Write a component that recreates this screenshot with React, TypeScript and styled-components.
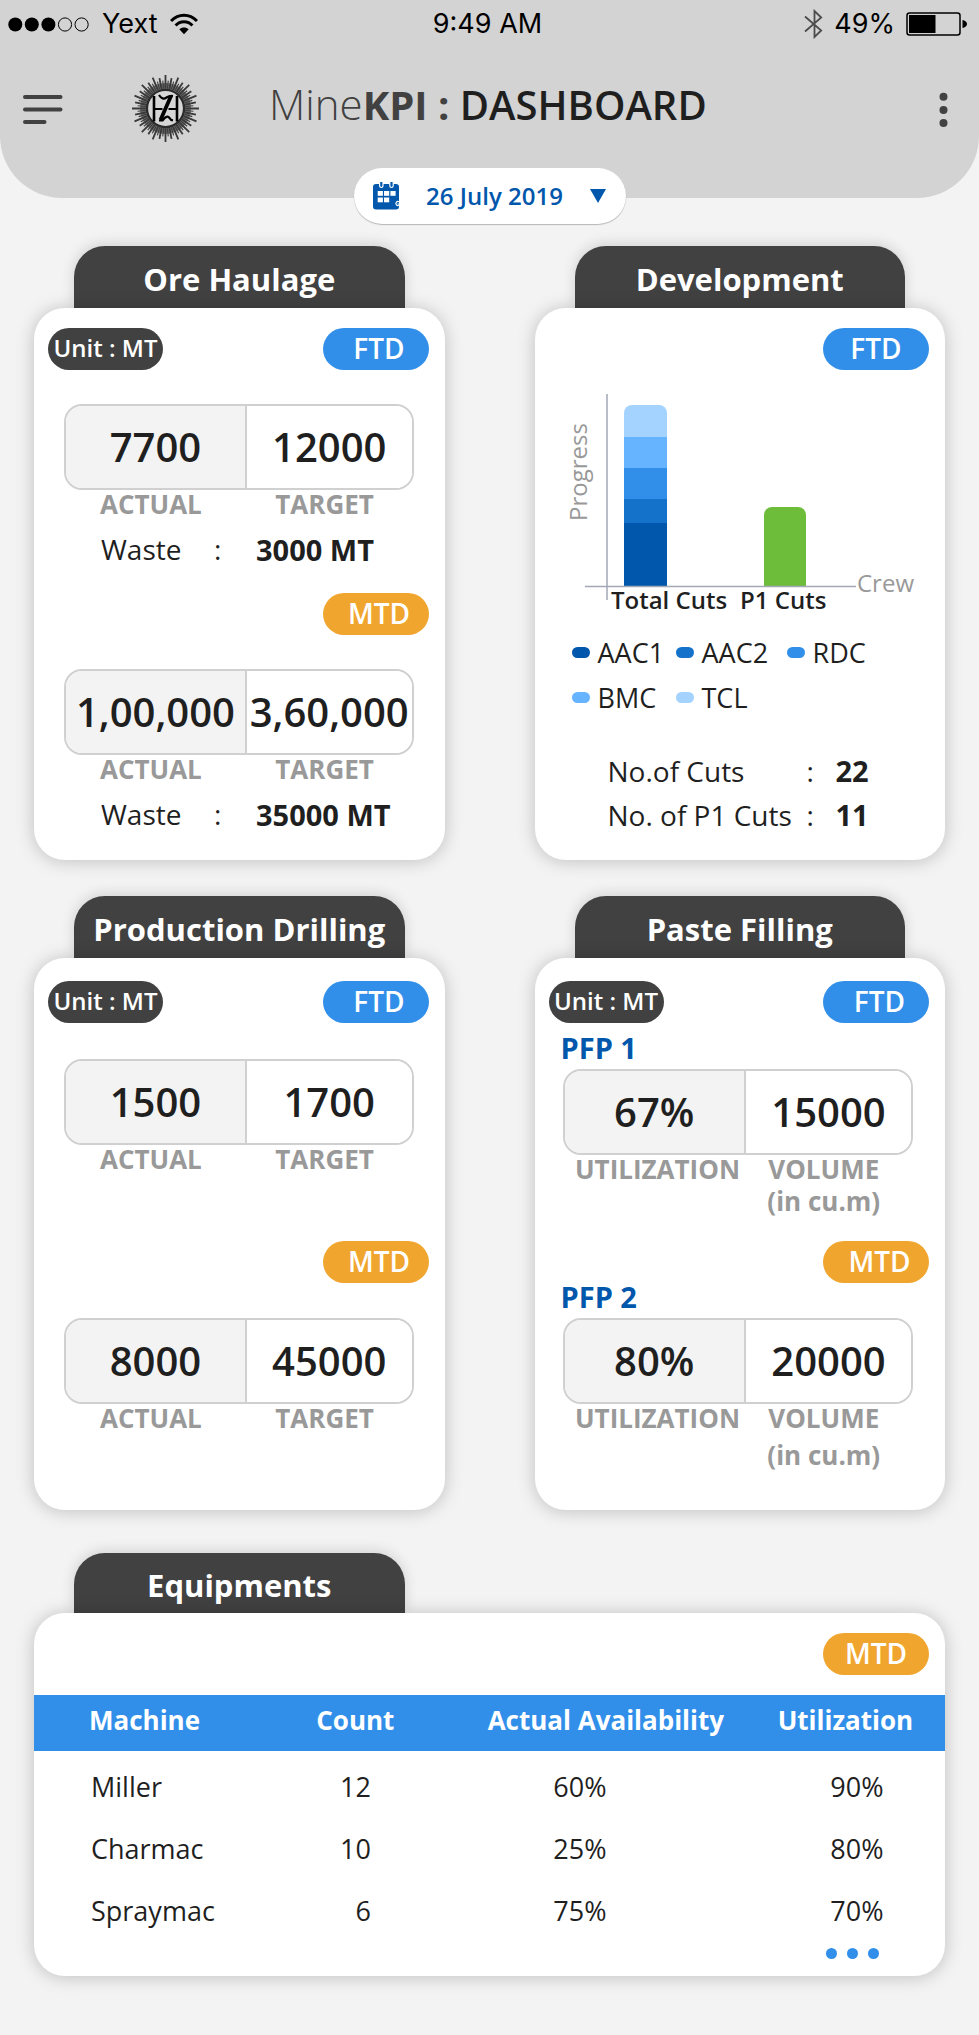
import React from "react";
import styled, { createGlobalStyle, ThemeProvider } from "styled-components";

const theme = {
  page: "#f3f3f3",
  header: "#d3d3d3",
  dark: "#414141",
  ink: "#1f1f1f",
  muted: "#999999",
  line: "#d0d0d0",
  blue: "#318fea",
  navy: "#0057ab",
  amber: "#f0a52e",
  green: "#6dbd3b",
};
type Theme = typeof theme;
const c = (key: keyof Theme) => (p: { theme: any }) => p.theme[key] as string;

const GlobalStyle = createGlobalStyle`
  *, *::before, *::after { box-sizing: border-box; }
  body {
    margin: 0;
    background: ${theme.page};
    color: ${theme.ink};
    font-family: "Open Sans", "Noto Sans", sans-serif;
  }
  h1, h2, h3, p { margin: 0; }
  svg { display: block; flex: none; }
`;

/* ---------- Header ---------- */

const Header = styled.header`
  height: 198px;
  background: ${c("header")};
  border-radius: 0 0 62px 62px;
`;

const StatusBar = styled.div`
  display: grid;
  grid-template-columns: 1fr auto 1fr;
  align-items: center;
  height: 48px;
  padding: 0 12px 0 8px;
  color: #000;
  font: 400 27px/48px Inter, Roboto, sans-serif;
`;

const StatusGroup = styled.div<{ $gap: number; $end?: boolean }>`
  display: flex;
  align-items: center;
  gap: ${(p) => p.$gap}px;
  justify-content: ${(p) => (p.$end ? "flex-end" : "flex-start")};
`;

const Toolbar = styled.div`
  display: flex;
  align-items: center;
  height: 116px;
  padding: 5px 27px 0 22px;
`;

const IconButton = styled.button`
  display: flex;
  padding: 0;
  border: 0;
  background: none;
  color: ${c("dark")};
  cursor: pointer;
`;

const LogoSlot = styled.div`
  margin: 0 69px 0 68px;
`;

const Title = styled.h1`
  flex: 1;
  padding-bottom: 8px;
  color: ${c("ink")};
  font-size: 40px;
  font-weight: 600;
  line-height: 56px;
  white-space: nowrap;
`;

const Brand = styled.span`
  color: ${c("dark")};
  font-weight: 700;
`;

const BrandLight = styled.span`
  font-size: 42px;
  font-weight: 300;
`;

const DateButton = styled.button`
  position: relative;
  display: flex;
  align-items: center;
  justify-content: space-between;
  width: 272px;
  height: 56px;
  margin: -30px auto 0;
  padding: 0 20px 0 19px;
  border: 0;
  border-radius: 28px;
  background: #fff;
  box-shadow: 0 1px 1px rgba(0, 0, 0, 0.25);
  color: ${c("navy")};
  font: 600 24px/56px "Open Sans", sans-serif;
  cursor: pointer;
`;

/* ---------- Panels ---------- */

const Main = styled.main`
  padding: 22px 34px 59px;
`;

const PanelGrid = styled.div`
  display: grid;
  grid-template-columns: 1fr 1fr;
  gap: 36px 90px;
`;

const Panel = styled.section`
  display: flex;
  flex-direction: column;
`;

const WidePanel = styled(Panel)`
  margin-top: 43px;
`;

const Tab = styled.h2`
  height: 62px;
  margin: 0 40px;
  padding-top: 4px;
  border-radius: 31px 31px 0 0;
  background: ${c("dark")};
  box-shadow: 0 -2px 14px rgba(0, 0, 0, 0.14);
  color: #fff;
  font-size: 31px;
  font-weight: 700;
  line-height: 58px;
  text-align: center;
  white-space: nowrap;
`;

const WideTab = styled(Tab)`
  width: calc((100% - 90px) / 2 - 80px);
  height: 60px;
  line-height: 56px;
`;

const Card = styled.div<{ $top?: number }>`
  flex: 1;
  min-height: 552px;
  padding: ${(p) => p.$top ?? 20}px 0 23px;
  border-radius: 31px;
  background: #fff;
  box-shadow: 0 1px 18px rgba(0, 0, 0, 0.22);
`;

const WideCard = styled(Card)`
  min-height: 0;
  padding-bottom: 12px;
`;

const BadgeRow = styled.div<{ $gap?: number }>`
  display: flex;
  justify-content: space-between;
  margin-top: ${(p) => p.$gap ?? 0}px;
  padding: 0 16px 0 14px;
`;

const UnitBadge = styled.span`
  width: 115px;
  height: 42px;
  border-radius: 21px;
  background: ${c("dark")};
  color: #fff;
  font-size: 24px;
  font-weight: 600;
  line-height: 40px;
  text-align: center;
  white-space: nowrap;
`;

const PeriodBadge = styled.span<{ $kind: "FTD" | "MTD"; $centered?: boolean }>`
  width: 106px;
  height: 42px;
  margin-left: auto;
  padding-left: ${(p) => (p.$centered ? 0 : 7)}px;
  border-radius: 21px;
  background: ${(p) => (p.$kind === "FTD" ? p.theme.blue : p.theme.amber)};
  color: #fff;
  font-size: 28px;
  font-weight: 600;
  line-height: 40px;
  text-align: center;
`;

const Meter = styled.div<{ $left: number; $right: number; $gap?: number }>`
  margin: ${(p) => p.$gap ?? 0}px ${(p) => p.$right}px 0 ${(p) => p.$left}px;
`;

const MeterBox = styled.div`
  display: grid;
  grid-template-columns: 11fr 10fr;
  height: 86px;
  overflow: hidden;
  border: 2px solid ${c("line")};
  border-radius: 18px;
`;

const MeterValue = styled.span<{ $shaded?: boolean }>`
  min-width: 0;
  border-right: ${(p) => (p.$shaded ? `2px solid ${p.theme.line}` : "0")};
  background: ${(p) => (p.$shaded ? p.theme.page : "#fff")};
  font-size: 40px;
  font-weight: 600;
  line-height: 82px;
  text-align: center;
  white-space: nowrap;
`;

const MeterLabels = styled.div<{ $wide?: boolean; $line?: number }>`
  display: grid;
  grid-template-columns: ${(p) => (p.$wide ? "4fr 3fr" : "1fr 1fr")};
  padding-right: ${(p) => (p.$wide ? 18 : 2)}px;
  color: ${c("muted")};
  font-size: 26px;
  font-weight: 700;
  line-height: ${(p) => p.$line ?? 28}px;
  text-align: center;
  white-space: nowrap;
`;

const MeterNote = styled.span`
  grid-column: 2;
`;

const PlantName = styled.h3<{ $gap?: number }>`
  margin: ${(p) => p.$gap ?? 0}px 28px 7px 26px;
  color: ${c("navy")};
  font-size: 29px;
  font-weight: 700;
  line-height: 28px;
`;

const FactRow = styled.p<{ $columns: string; $left: number; $line: number; $gap?: number }>`
  display: grid;
  grid-template-columns: ${(p) => p.$columns};
  margin-top: ${(p) => p.$gap ?? 0}px;
  padding-left: ${(p) => p.$left}px;
  font-size: 28px;
  line-height: ${(p) => p.$line}px;
  white-space: nowrap;
`;

const FactValue = styled.strong`
  font-size: 29px;
  font-weight: 700;
`;

/* ---------- Chart ---------- */

const ChartSvg = styled.svg`
  margin: 16px 0 0 26px;
  font-size: 24px;
`;

const Legend = styled.ul`
  display: grid;
  grid-template-columns: 104px 111px auto;
  margin: 14px 0 29px;
  padding: 0 0 0 37px;
  list-style: none;
`;

const LegendItem = styled.li<{ $color: string }>`
  display: flex;
  align-items: center;
  gap: 8px;
  font-size: 27px;
  line-height: 45px;
  white-space: nowrap;

  &::before {
    content: "";
    width: 18px;
    height: 11px;
    border-radius: 6px;
    background: ${(p) => p.$color};
  }
`;

/* ---------- Table ---------- */

const EquipmentTable = styled.table`
  width: 100%;
  margin-top: 20px;
  border-collapse: collapse;
  table-layout: fixed;
`;

const Col = styled.col<{ $width: number }>`
  width: ${(p) => p.$width}%;
`;

const Th = styled.th<{ $pad: string; $left?: boolean }>`
  height: 56px;
  padding: ${(p) => p.$pad};
  background: ${c("blue")};
  color: #fff;
  font-size: 26px;
  font-weight: 700;
  line-height: 50px;
  text-align: ${(p) => (p.$left ? "left" : "center")};
  white-space: nowrap;
`;

const Td = styled.td<{ $align: "left" | "center" | "right"; $pad: string }>`
  height: 62px;
  padding: ${(p) => p.$pad};
  font-size: 27px;
  line-height: 62px;
  text-align: ${(p) => p.$align};

  tr:first-child > & {
    height: 67px;
    padding-top: 5px;
  }
`;

const MoreButton = styled.button`
  display: flex;
  align-items: center;
  gap: 10px;
  height: 22px;
  margin: 0 66px 0 auto;
  padding: 0;
  border: 0;
  background: none;
  cursor: pointer;
`;

const MoreDot = styled.span`
  width: 11px;
  height: 11px;
  border-radius: 50%;
  background: ${c("blue")};
`;

/* ---------- Icons ---------- */

const SignalIcon = () => (
  <svg width="82" height="16" viewBox="0 0 82 16" aria-hidden="true">
    {[7.3, 23.8, 40.4].map((x) => <circle key={x} cx={x} cy="8.5" r="7" />)}
    {[57, 73.6].map((x) => (
      <circle key={x} cx={x} cy="8.5" r="6.6" fill="none" stroke="#000" strokeWidth="1" />
    ))}
  </svg>
);

const WifiIcon = () => (
  <svg width="28" height="22" viewBox="0 0 28 22" aria-hidden="true">
    <g fill="none" stroke="#000" strokeWidth="3">
      <path d="M1 8 C8.5 0.2 19.5 0.2 27 8" />
      <path d="M5.6 12.4 C10.2 7.4 17.8 7.4 22.4 12.4" />
    </g>
    <path d="M9.3 16.3 C12 13.8 16 13.8 18.7 16.3 L14 21.3 Z" />
  </svg>
);

const BluetoothIcon = () => (
  <svg width="19" height="30" viewBox="0 0 19 30" aria-hidden="true">
    <path d="M1 7.5 L17.2 21.5 L10.5 28 V2 L17.2 8.5 L1 22.5" fill="none" stroke="#4c4c4c" strokeWidth="1.8" />
  </svg>
);

const BatteryIcon = () => (
  <svg width="61" height="24" viewBox="0 0 61 24" aria-hidden="true">
    <rect x="1" y="1" width="53" height="22" rx="2.5" fill="none" stroke="#000" strokeWidth="1.5" />
    <rect x="3" y="3" width="26.5" height="18" />
    <path d="M56.5 8 C59 8.5 61 10 61 12 C61 14 59 15.5 56.5 16 Z" />
  </svg>
);

const MenuIcon = () => (
  <svg width="41" height="31" viewBox="0 0 41 31" aria-hidden="true">
    <path d="M3 4 H38.5 M3 16.5 H38.5 M3 29 H22.5" stroke="currentColor" strokeWidth="4" strokeLinecap="round" />
  </svg>
);

const KebabIcon = () => (
  <svg width="17" height="36" viewBox="0 0 17 36" aria-hidden="true" fill="currentColor">
    {[5.7, 19, 32].map((y) => <circle key={y} cx="8.5" cy={y} r="4" />)}
  </svg>
);

const ray = (i: number, n: number, r1: number, r2: number) => {
  const a = (i / n) * Math.PI * 2;
  return `M${Math.sin(a) * r1} ${-Math.cos(a) * r1}L${Math.sin(a) * r2} ${-Math.cos(a) * r2}`;
};

const Logo = () => (
  <svg width="69" height="69" viewBox="-34.5 -34.5 69 69" role="img" aria-label="Company logo">
    <circle r="22.5" fill="none" stroke="#6f6f6f" strokeWidth="6" />
    <g stroke="#3a3a3a" fill="none">
      <path d={Array.from({ length: 64 }, (_, i) => ray(i, 64, 20, 28)).join("")} strokeWidth="1.1" />
      <path d={Array.from({ length: 32 }, (_, i) => ray(i, 32, 20, i % 2 ? 31 : 33.5)).join("")} strokeWidth="1.8" />
    </g>
    <circle r="18.6" fill="#d6d6d6" stroke="#2b2b2b" strokeWidth="2.4" />
    <g fill="none" stroke="#000">
      <path d="M-11.5 -12.5 V13 M11.5 -12.5 V13" strokeWidth="2.6" />
      <path d="M-11.5 0.5 H-3 M3 0.5 H11.5" strokeWidth="2.2" />
      <path d="M5.5 -12.5 L-5 11.5" strokeWidth="3.8" />
      <path d="M-6.5 -13.5 Q-3 -8 1 -11 Q4 -13 7.5 -12.5" strokeWidth="2.2" />
      <path d="M-6.5 12 H-3 Q1.5 6 4 9.500 Q5 11.5 7.5 12" strokeWidth="2.2" />
    </g>
  </svg>
);

const CalendarIcon = () => (
  <svg width="27" height="28" viewBox="0 0 27 28" aria-hidden="true">
    <rect y="2" width="26" height="25.5" rx="3" fill={theme.navy} />
    <g fill={theme.navy} stroke="#fff" strokeWidth="1.2">
      <rect x="6.6" y="-1" width="3.4" height="6.5" rx="1.7" />
      <rect x="16.8" y="-1" width="3.4" height="6.5" rx="1.7" />
    </g>
    <g fill="#fff">
      {[4.7, 11, 17.4].map((x) => <rect key={x} x={x} y="9" width="5.2" height="4.8" />)}
      {[4.7, 11].map((x) => <rect key={x} x={x} y="15.5" width="5.2" height="4.8" />)}
    </g>
    <path d="M26 19.8 A2 2 0 1 0 26 23.2 M24.5 22 H26.5" fill="none" stroke="#fff" strokeWidth="1.2" />
  </svg>
);

const CaretIcon = () => (
  <svg width="16" height="14" viewBox="0 0 16 14" aria-hidden="true">
    <path d="M0 0 H16 L8 14 Z" fill={theme.navy} />
  </svg>
);

/* ---------- Data ---------- */

const crews = [
  { name: "AAC1", color: "#0057ab", height: 63 },
  { name: "AAC2", color: "#1572cb", height: 24 },
  { name: "RDC", color: "#318fea", height: 31 },
  { name: "BMC", color: "#66b3ff", height: 31 },
  { name: "TCL", color: "#a4d3ff", height: 32 },
];

const equipment = [
  ["Miller", "12", "60%", "90%"],
  ["Charmac", "10", "25%", "80%"],
  ["Spraymac", "6", "75%", "70%"],
];

/* ---------- Parts ---------- */

const ActualTarget = ({ actual, target, gap }: { actual: string; target: string; gap: number }) => (
  <Meter $left={30} $right={31} $gap={gap}>
    <MeterBox>
      <MeterValue $shaded>{actual}</MeterValue>
      <MeterValue>{target}</MeterValue>
    </MeterBox>
    <MeterLabels>
      <span>ACTUAL</span>
      <span>TARGET</span>
    </MeterLabels>
  </Meter>
);

const Plant = ({ utilization, volume, noteLine }: { utilization: string; volume: string; noteLine: number }) => (
  <Meter $left={28} $right={32}>
    <MeterBox>
      <MeterValue $shaded>{utilization}</MeterValue>
      <MeterValue>{volume}</MeterValue>
    </MeterBox>
    <MeterLabels $wide>
      <span>UTILIZATION</span>
      <span>VOLUME</span>
    </MeterLabels>
    <MeterLabels $wide $line={noteLine}>
      <MeterNote>(in cu.m)</MeterNote>
    </MeterLabels>
  </Meter>
);

const Waste = ({ value }: { value: string }) => (
  <FactRow $columns="113px 42px auto" $left={67} $line={39} $gap={12}>
    <span>Waste</span>
    <span>:</span>
    <FactValue>{value}</FactValue>
  </FactRow>
);

const CutsFact = ({ label, value }: { label: string; value: string }) => (
  <FactRow $columns="199px 29px auto" $left={73} $line={44}>
    <span>{label}</span>
    <span>:</span>
    <FactValue>{value}</FactValue>
  </FactRow>
);

const CrewChart = () => {
  const base = 200;
  let top = base;
  return (
    <ChartSvg width="370" height="230" viewBox="0 0 370 230" role="img" aria-label="Cuts by crew">
      <defs>
        <clipPath id="stack">
          <rect x="63" y="19" width="43" height="200" rx="8" />
        </clipPath>
        <clipPath id="plot">
          <rect width="370" height={base} />
        </clipPath>
      </defs>
      <g clipPath="url(#plot)">
        <g clipPath="url(#stack)">
          {crews.map((crew) => {
            top -= crew.height;
            return <rect key={crew.name} x="63" y={top} width="43" height={crew.height} fill={crew.color} />;
          })}
        </g>
        <rect x="203" y="121" width="42" height="100" rx="8" fill={theme.green} />
      </g>
      <path d="M46 8 V214 M24 200.5 H295" stroke="#a3a8b5" strokeWidth="1.5" />
      <g fill={theme.muted}>
        <text transform="translate(26 135) rotate(-90)">Progress</text>
        <text x="296" y="206">Crew</text>
      </g>
      <g fill={theme.ink} fontWeight="600">
        <text x="50" y="223">Total Cuts</text>
        <text x="179" y="223">P1 Cuts</text>
      </g>
    </ChartSvg>
  );
};

export default function App() {
  return (
    <ThemeProvider theme={theme}>
      <GlobalStyle />
      <Header>
        <StatusBar>
          <StatusGroup $gap={12}>
            <SignalIcon />
            <span>Yext</span>
            <WifiIcon />
          </StatusGroup>
          <span>9:49 AM</span>
          <StatusGroup $gap={11} $end>
            <BluetoothIcon />
            <span>49%</span>
            <BatteryIcon />
          </StatusGroup>
        </StatusBar>
        <Toolbar>
          <IconButton type="button" aria-label="Menu"><MenuIcon /></IconButton>
          <LogoSlot><Logo /></LogoSlot>
          <Title>
            <Brand><BrandLight>Mine</BrandLight>KPI :</Brand> DASHBOARD
          </Title>
          <IconButton type="button" aria-label="More options"><KebabIcon /></IconButton>
        </Toolbar>
      </Header>
      <DateButton type="button" aria-haspopup="dialog">
        <CalendarIcon />
        26 July 2019
        <CaretIcon />
      </DateButton>

      <Main>
        <PanelGrid>
          <Panel>
            <Tab>Ore Haulage</Tab>
            <Card>
              <BadgeRow>
                <UnitBadge>Unit : MT</UnitBadge>
                <PeriodBadge $kind="FTD">FTD</PeriodBadge>
              </BadgeRow>
              <ActualTarget actual="7700" target="12000" gap={34} />
              <Waste value="3000 MT" />
              <BadgeRow $gap={24}>
                <PeriodBadge $kind="MTD">MTD</PeriodBadge>
              </BadgeRow>
              <ActualTarget actual="1,00,000" target="3,60,000" gap={34} />
              <Waste value="35000 MT" />
            </Card>
          </Panel>

          <Panel>
            <Tab>Development</Tab>
            <Card>
              <BadgeRow>
                <PeriodBadge $kind="FTD" $centered>FTD</PeriodBadge>
              </BadgeRow>
              <CrewChart />
              <Legend>
                {crews.map((crew) => (
                  <LegendItem key={crew.name} $color={crew.color}>{crew.name}</LegendItem>
                ))}
              </Legend>
              <CutsFact label="No.of Cuts" value="22" />
              <CutsFact label="No. of P1 Cuts" value="11" />
            </Card>
          </Panel>

          <Panel>
            <Tab>Production Drilling</Tab>
            <Card $top={23}>
              <BadgeRow>
                <UnitBadge>Unit : MT</UnitBadge>
                <PeriodBadge $kind="FTD">FTD</PeriodBadge>
              </BadgeRow>
              <ActualTarget actual="1500" target="1700" gap={36} />
              <BadgeRow $gap={68}>
                <PeriodBadge $kind="MTD">MTD</PeriodBadge>
              </BadgeRow>
              <ActualTarget actual="8000" target="45000" gap={35} />
            </Card>
          </Panel>

          <Panel>
            <Tab>Paste Filling</Tab>
            <Card $top={23}>
              <BadgeRow>
                <UnitBadge>Unit : MT</UnitBadge>
                <PeriodBadge $kind="FTD">FTD</PeriodBadge>
              </BadgeRow>
              <PlantName $gap={11}>PFP 1</PlantName>
              <Plant utilization="67%" volume="15000" noteLine={36} />
              <BadgeRow $gap={22}>
                <PeriodBadge $kind="MTD">MTD</PeriodBadge>
              </BadgeRow>
              <PlantName>PFP 2</PlantName>
              <Plant utilization="80%" volume="20000" noteLine={46} />
            </Card>
          </Panel>
        </PanelGrid>

        <WidePanel>
          <WideTab>Equipments</WideTab>
          <WideCard>
            <BadgeRow>
              <PeriodBadge $kind="MTD" $centered>MTD</PeriodBadge>
            </BadgeRow>
            <EquipmentTable>
              <colgroup>
                <Col $width={26} />
                <Col $width={18} />
                <Col $width={37} />
                <Col $width={19} />
              </colgroup>
              <thead>
                <tr>
                  <Th scope="col" $left $pad="0 0 6px 55px">Machine</Th>
                  <Th scope="col" $pad="0 0 6px 5px">Count</Th>
                  <Th scope="col" $pad="0 0 6px 5px">Actual Availability</Th>
                  <Th scope="col" $pad="0 26px 6px 0">Utilization</Th>
                </tr>
              </thead>
              <tbody>
                {equipment.map(([machine, count, availability, utilization]) => (
                  <tr key={machine}>
                    <Td $align="left" $pad="0 0 0 57px">{machine}</Td>
                    <Td $align="right" $pad="0 64px 0 0">{count}</Td>
                    <Td $align="center" $pad="0 47px 0 0">{availability}</Td>
                    <Td $align="center" $pad="0 3px 0 0">{utilization}</Td>
                  </tr>
                ))}
              </tbody>
            </EquipmentTable>
            <MoreButton type="button" aria-label="Show more equipment">
              <MoreDot />
              <MoreDot />
              <MoreDot />
            </MoreButton>
          </WideCard>
        </WidePanel>
      </Main>
    </ThemeProvider>
  );
}
